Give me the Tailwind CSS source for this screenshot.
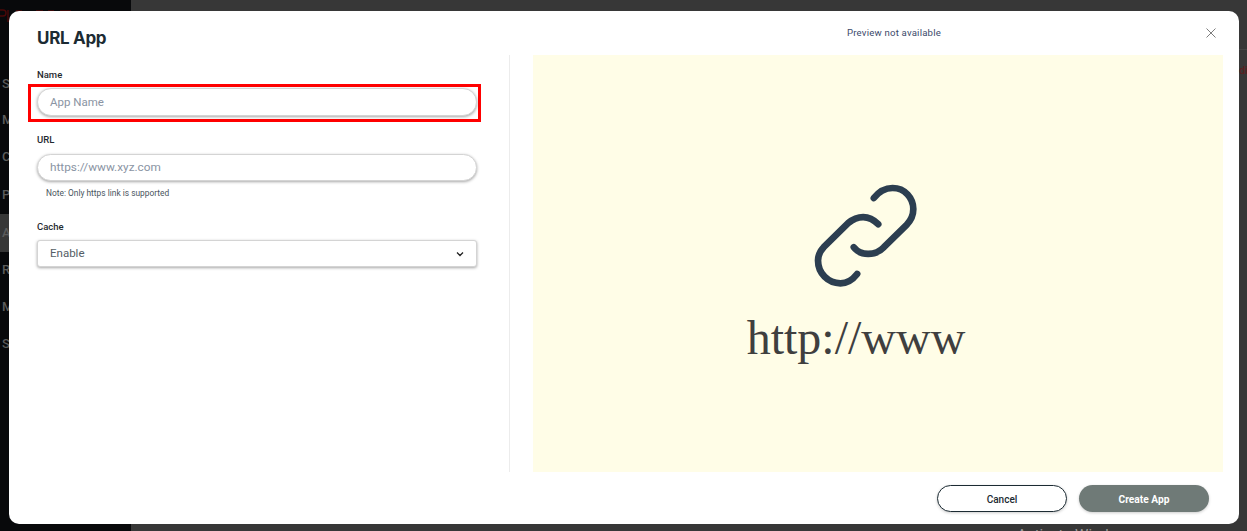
<!DOCTYPE html>
<html>
<head>
<meta charset="utf-8">
<title>URL App</title>
<script src="https://cdn.jsdelivr.net/npm/@tailwindcss/browser@4"></script>
</head>
<body class="font-['Roboto',sans-serif]">
<div class="relative flex h-[531px] w-[1247px] overflow-hidden bg-[#373737]">
  <!-- page behind the modal -->
  <aside class="flex w-[131px] shrink-0 flex-col bg-[#08090b] pt-[66px] text-[13px] font-medium text-[#5c5c5c]">
    <div class="flex h-[36px] items-center pl-[2px]">S</div>
    <div class="flex h-[36px] items-center pl-[2px]">M</div>
    <div class="flex h-[38px] items-center pl-[2px]">C</div>
    <div class="flex h-[38px] items-center pl-[2px]">P</div>
    <div class="flex h-[38px] items-center bg-[#373737] pl-[2px]">A</div>
    <div class="flex h-[36px] items-center pl-[2px]">R</div>
    <div class="flex h-[38px] items-center pl-[2px]">M</div>
    <div class="flex h-[36px] items-center pl-[2px]">S</div>
  </aside>
  <div class="flex-1"></div>

  <!-- logo behind the modal, only its top edge shows -->
  <svg class="absolute left-0 top-[9px] h-[14px] w-[75px] text-[#4a0808]" viewBox="0 0 75 14" fill="none" stroke="currentColor" stroke-width="1.4">
    <path d="M0 1h3a2.5 2.5 0 0 1 0 6H0M8 1v12M16 2h6M36 2h7M48 2h6M60 2h11"/>
  </svg>
  <div class="absolute left-[1239px] top-[49px] h-px w-[8px] bg-[#444444]"></div>

  <!-- modal -->
  <div class="absolute left-[9px] top-[11px] flex h-[513px] w-[1230px] flex-col rounded-[10px] bg-white">
    <header class="flex h-[44px] shrink-0 items-center pl-[28px] pr-[23px]">
      <h2 class="w-[501px] shrink-0 pt-[11px] font-['Inter',sans-serif] text-[17px] font-bold tracking-[-0.3px] text-[#1c2b33]">URL App</h2>
      <p class="flex-1 pl-[44px] text-center text-[9.6px] tracking-[0.2px] text-[#3b4a6b]">Preview not available</p>
      <svg class="h-[10px] w-[10px] text-[#7d7d7d]" viewBox="0 0 10 10" fill="none" stroke="currentColor" stroke-width="1"><path d="M0.5 0.5l9 9M9.5 0.5l-9 9"/></svg>
    </header>

    <div class="flex h-[417px] shrink-0">
      <!-- form -->
      <div class="w-[501px] shrink-0 border-r border-[#ececec] pl-[28px] pr-[32px]">
        <label class="mt-[14px] block text-[9.5px] font-medium leading-[12px] text-[#1f2a30]">Name</label>
        <div class="-ml-[9px] -mr-[4px] mt-[3px] border-[3px] border-[#ff0000] pb-[3px] pl-[6px] pr-[1px] pt-[1px]">
          <div class="flex h-[28px] items-center rounded-full border border-[#d4d4d4] bg-white pl-[12px] pt-[1px] text-[11.5px] text-[#8a94a3] shadow-[0_1px_3px_rgba(0,0,0,0.35)]">App Name</div>
        </div>
        <label class="mt-[12px] block text-[9.5px] font-medium leading-[12px] text-[#1f2a30]">URL</label>
        <div class="mt-[8px] flex h-[27px] items-center rounded-full border border-[#d4d4d4] bg-white pl-[12px] text-[11.8px] text-[#8a94a3] shadow-[0_1px_3px_rgba(0,0,0,0.35)]">https://www.xyz.com</div>
        <p class="mt-[7px] pl-[9px] text-[8.4px] leading-[10px] text-[#4a5560]">Note: Only https link is supported</p>
        <label class="mt-[23px] block text-[9.5px] font-medium leading-[12px] text-[#1f2a30]">Cache</label>
        <div class="mt-[7px] flex h-[27px] items-center justify-between rounded-[3px] border border-[#d4d4d4] bg-white pl-[12px] pr-[12px] text-[11.5px] text-[#555e66] shadow-[0_1px_3px_rgba(0,0,0,0.35)]">
          <span>Enable</span>
          <svg class="h-[6px] w-[8px] text-[#222]" viewBox="0 0 8 6" fill="none" stroke="currentColor" stroke-width="1.3"><path d="M1 1.5l3 3 3-3"/></svg>
        </div>
      </div>

      <!-- preview -->
      <div class="ml-[23px] flex w-[690px] flex-col items-center bg-[#fffde7] pt-[128px]">
        <svg class="ml-[-24px] h-[107px] w-[107px] text-[#2c3e50]" viewBox="280 40 320 320" fill="none" stroke="currentColor" stroke-width="20" stroke-linecap="round" stroke-linejoin="round">
          <path d="M462 85C480 62 500 55 518 55C555 55 580 85 580 118C580 135 573 152 560 165L492 232C478 247 460 252 445 252C428 252 412 245 402 232"/>
          <path d="M475 163C460 148 445 142 430 142C412 142 397 150 385 160L312 232C300 245 295 258 295 272C295 310 325 340 362 340C380 340 398 330 412 312"/>
        </svg>
        <div class="ml-[-44px] mt-[20px] font-['Liberation_Serif',serif] text-[48px] leading-[56px] text-[#3f3f3f]">http://www</div>
      </div>
    </div>

    <footer class="flex flex-1 items-start justify-end gap-[12px] pr-[30px] pt-[13px]">
      <button class="flex h-[27px] w-[130px] items-center justify-center rounded-full border border-[#1c2b33] bg-white pt-[2px] text-[10px] font-medium text-[#1c2b33] shadow-[0_1px_3px_rgba(0,0,0,0.2)]">Cancel</button>
      <button class="flex h-[27px] w-[130px] items-center justify-center rounded-full bg-[#6f7a77] pt-[2px] text-[10.2px] font-bold text-white shadow-[0_1px_3px_rgba(0,0,0,0.2)]">Create App</button>
    </footer>
  </div>

  <!-- text peeking out from behind the modal -->
  <div class="absolute left-[1017px] top-[525px] text-[15px] leading-[20px] text-[#9a9a9a]">Activate Windows</div>
  <div class="absolute left-[1239px] top-[63px] text-[11px] font-medium text-[#5a1f1f]">dis</div>
</div>
</body>
</html>
